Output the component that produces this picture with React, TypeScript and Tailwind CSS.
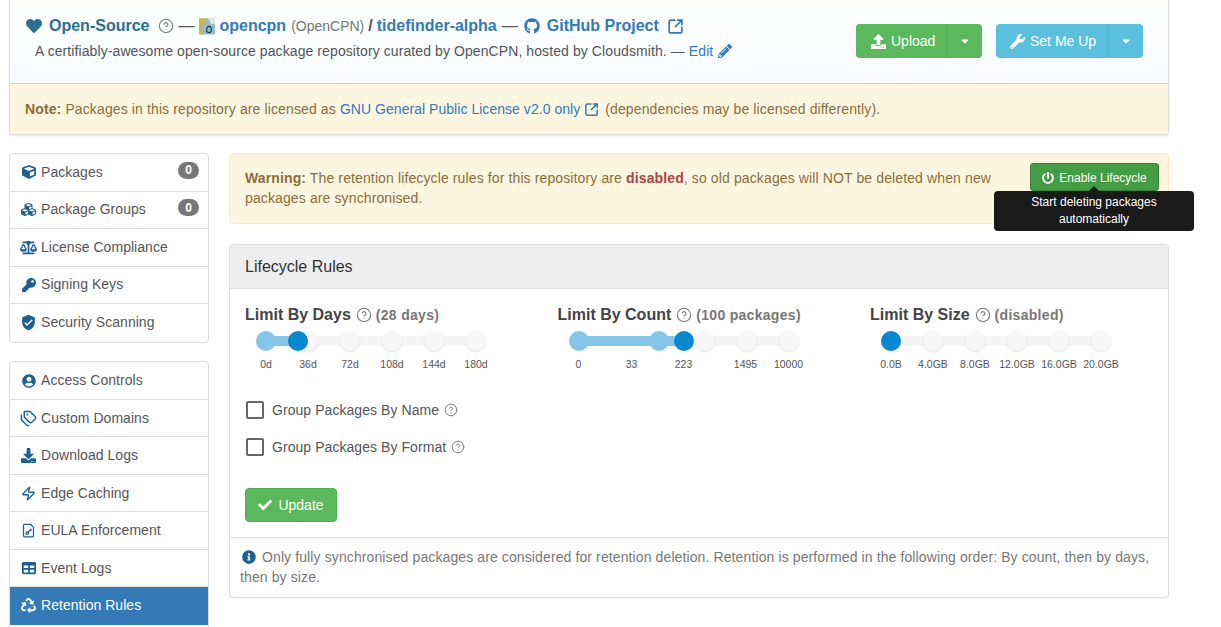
import type { ReactNode } from "react";
import { CircleHelp, SquareArrowOutUpRight, Tags, Zap } from "lucide-react";
import {
  FaBalanceScale,
  FaCaretDown,
  FaCheck,
  FaCube,
  FaCubes,
  FaDownload,
  FaGithub,
  FaHeart,
  FaInfoCircle,
  FaKey,
  FaPencilAlt,
  FaPowerOff,
  FaRecycle,
  FaTable,
  FaUpload,
  FaUserCircle,
  FaWrench,
} from "react-icons/fa";
import { LuFileKey } from "react-icons/lu";
import { MdVerifiedUser } from "react-icons/md";

interface NavItem {
  label: string;
  icon: ReactNode;
  badge?: string;
  active?: boolean;
}

const topNav: NavItem[] = [
  { label: "Packages", icon: <FaCube className="w-[14px] h-[14px]" />, badge: "0" },
  { label: "Package Groups", icon: <FaCubes className="w-[15px] h-[15px]" />, badge: "0" },
  { label: "License Compliance", icon: <FaBalanceScale className="w-[17px] h-[17px]" /> },
  { label: "Signing Keys", icon: <FaKey className="w-[14px] h-[14px]" /> },
  { label: "Security Scanning", icon: <MdVerifiedUser className="w-[17px] h-[17px]" /> },
];

const bottomNav: NavItem[] = [
  { label: "Access Controls", icon: <FaUserCircle className="w-[14px] h-[14px]" /> },
  { label: "Custom Domains", icon: <Tags className="w-[17px] h-[17px]" strokeWidth={2} /> },
  { label: "Download Logs", icon: <FaDownload className="w-[15px] h-[15px]" /> },
  { label: "Edge Caching", icon: <Zap className="w-[15px] h-[15px]" strokeWidth={2.2} /> },
  { label: "EULA Enforcement", icon: <LuFileKey className="w-[15px] h-[15px]" /> },
  { label: "Event Logs", icon: <FaTable className="w-[14px] h-[14px]" /> },
  { label: "Retention Rules", icon: <FaRecycle className="w-[15px] h-[15px]" />, active: true },
];

const SLIDER_TICKS = [0, 42, 84, 126, 168, 210];

interface SliderProps {
  title: string;
  note: string;
  labels: { text: string; x: number }[];
  handles: { x: number; selected?: boolean }[];
}

const sliders: SliderProps[] = [
  {
    title: "Limit By Days",
    note: "(28 days)",
    labels: [
      { text: "0d", x: 0 },
      { text: "36d", x: 42 },
      { text: "72d", x: 84 },
      { text: "108d", x: 126 },
      { text: "144d", x: 168 },
      { text: "180d", x: 210 },
    ],
    handles: [{ x: 0 }, { x: 32, selected: true }],
  },
  {
    title: "Limit By Count",
    note: "(100 packages)",
    labels: [
      { text: "0", x: 0 },
      { text: "33", x: 53 },
      { text: "223", x: 105 },
      { text: "1495", x: 167 },
      { text: "10000", x: 210 },
    ],
    handles: [{ x: 0 }, { x: 80 }, { x: 105, selected: true }],
  },
  {
    title: "Limit By Size",
    note: "(disabled)",
    labels: [
      { text: "0.0B", x: 0 },
      { text: "4.0GB", x: 42 },
      { text: "8.0GB", x: 84 },
      { text: "12.0GB", x: 126 },
      { text: "16.0GB", x: 168 },
      { text: "20.0GB", x: 210 },
    ],
    handles: [{ x: 0, selected: true }],
  },
];

function Help({ className = "w-[16px] h-[16px]" }: { className?: string }) {
  return <CircleHelp className={`inline-block text-[#777] shrink-0 ${className}`} strokeWidth={1.6} />;
}

function NavRow({ item }: { item: NavItem }) {
  return (
    <div
      className={`flex items-center h-[37.5px] pl-[10px] pr-[9px] border-b last:border-b-0 tracking-[0.04px] ${
        item.active ? "bg-[#337ab7] border-[#337ab7] text-white" : "border-[#ddd] text-[#555]"
      }`}
    >
      <span
        className={`w-[17px] mr-[4px] flex justify-center shrink-0 ${
          item.active ? "text-white" : "text-[#1d5f91]"
        }`}
      >
        {item.icon}
      </span>
      <span className="text-[14px] flex-1">{item.label}</span>
      {item.badge && (
        <span className="bg-[#777] text-white text-[12px] font-bold rounded-[10px] w-[21px] h-[17px] flex items-center justify-center -mt-[4px]">
          {item.badge}
        </span>
      )}
    </div>
  );
}

function LimitSlider({ title, note, labels, handles }: SliderProps) {
  const last = handles[handles.length - 1].x;
  return (
    <div className="w-[312.5px] shrink-0">
      <div className="flex items-center h-[22px] tracking-normal">
        <span className="text-[16px] font-bold text-[#444]">{title}</span>
        <Help className="w-[16px] h-[16px] ml-[5px]" />
        <span className="text-[14px] font-bold text-[#777] ml-[4px] tracking-[0.3px]">{note}</span>
      </div>
      <div className="relative ml-[21px] w-[210px] h-[20px] mt-[5px]">
        <div className="absolute left-0 right-0 top-[5px] h-[10px] bg-[#f5f5f5]" />
        {SLIDER_TICKS.filter((x) => x >= last).map((x) => (
          <span
            key={x}
            className="absolute top-0 -ml-[10px] w-[20px] h-[20px] rounded-full bg-[#f7f7f7] shadow-[0_1px_2px_rgba(0,0,0,0.12)]"
            style={{ left: x }}
          />
        ))}
        <div className="absolute left-0 top-[5px] h-[10px] bg-[#85c5e8]" style={{ width: last }} />
        {handles.map((h) => (
          <span
            key={h.x}
            className={`absolute top-0 -ml-[10px] w-[20px] h-[20px] rounded-full ${
              h.selected ? "bg-[#0a88cf]" : "bg-[#85c5e8]"
            }`}
            style={{ left: h.x }}
          />
        ))}
      </div>
      <div className="relative ml-[21px] w-[210px] h-[14px] mt-[6px] tracking-normal">
        {labels.map((l) => (
          <span
            key={l.text}
            className="absolute -translate-x-1/2 text-[10.5px] leading-[14px] text-[#555] whitespace-nowrap"
            style={{ left: l.x }}
          >
            {l.text}
          </span>
        ))}
      </div>
    </div>
  );
}

function Check({ label }: { label: string }) {
  return (
    <div className="flex items-center h-[20px] tracking-[0.06px]">
      <span className="ml-[1px] w-[18px] h-[18px] border-2 border-[#666] rounded-[2px] bg-white shrink-0" />
      <span className="ml-[8px] text-[14px] text-[#555]">{label}</span>
      <Help className="w-[14px] h-[14px] ml-[5px]" />
    </div>
  );
}

export default function App() {
  return (
    <div className="h-[627px] overflow-hidden bg-white pl-[9px] text-[14px] tracking-[0.12px] text-[#555] font-['Liberation_Sans',Arial,sans-serif]">
      <div className="w-[1160px]">
        {/* Repository header */}
        <div className="border-x border-b border-[#ddd] rounded-b-[4px] shadow-[0_1px_2px_rgba(0,0,0,0.1)] h-[135px]">
          <div className="h-[84px] bg-gradient-to-b from-white to-[#f6fbff] border-b border-[#ccc] flex justify-between">
            <div className="pl-[16px] pt-[15px]">
              <div className="flex items-center h-[22px] text-[16px] font-bold whitespace-nowrap tracking-normal">
                <FaHeart className="w-[16px] h-[16px] text-[#2a6f90]" />
                <span className="ml-[7px] text-[#2a6f90]">Open-Source</span>
                <Help className="w-[16px] h-[16px] ml-[9px]" />
                <span className="ml-[4px] font-normal text-[#555]">—</span>
                <svg viewBox="0 0 16 16" className="w-[16px] h-[17px] ml-[5px]">
                  <rect width="16" height="16" fill="#8fbcd0" />
                  <path d="M0 0h9l-2 5-4 2 1 9H0z" fill="#c9b45a" />
                  <path d="M9 0h7v5l-4 1z" fill="#e2e6d8" />
                  <ellipse cx="10" cy="11" rx="2.4" ry="3.2" fill="none" stroke="#243" strokeWidth="1.2" />
                </svg>
                <span className="ml-[4px] text-[#337ab7]">opencpn</span>
                <span className="ml-[5px] text-[14px] font-normal text-[#777]">(OpenCPN)</span>
                <span className="ml-[4px] text-[#555]">/</span>
                <span className="ml-[4px] text-[#337ab7]">tidefinder-alpha</span>
                <span className="ml-[5px] font-normal text-[#555]">—</span>
                <FaGithub className="w-[16px] h-[16px] ml-[6px] text-[#337ab7]" />
                <span className="ml-[7px] text-[#337ab7]">GitHub Project</span>
                <SquareArrowOutUpRight className="w-[17px] h-[17px] ml-[8px] text-[#337ab7]" strokeWidth={2.4} />
              </div>
              <div className="flex items-center mt-[4px] ml-[9px] h-[20px] whitespace-nowrap text-[#555] tracking-[0.09px]">
                <span>
                  A certifiably-awesome open-source package repository curated by OpenCPN, hosted by
                  Cloudsmith. —{" "}
                </span>
                <span className="ml-[4px] text-[#337ab7]">Edit</span>
                <FaPencilAlt className="w-[14px] h-[14px] ml-[5px] text-[#337ab7]" />
              </div>
            </div>
            <div className="flex pt-[24px] pr-[25px] gap-[14px] tracking-normal">
              <div className="flex h-[34px] rounded-[4px] bg-[#5cb85c] text-white">
                <div className="flex items-center pl-[15px] w-[91px] border-r border-[#4cae4c]">
                  <FaUpload className="w-[15px] h-[15px]" />
                  <span className="ml-[5px]">Upload</span>
                </div>
                <div className="flex items-center justify-center w-[35px]">
                  <FaCaretDown className="w-[12px] h-[12px]" />
                </div>
              </div>
              <div className="flex h-[34px] rounded-[4px] bg-[#5bc0de] text-white">
                <div className="flex items-center pl-[14px] w-[112px] border-r border-[#46b8da]">
                  <FaWrench className="w-[15px] h-[15px]" />
                  <span className="ml-[5px]">Set Me Up</span>
                </div>
                <div className="flex items-center justify-center w-[35px]">
                  <FaCaretDown className="w-[12px] h-[12px]" />
                </div>
              </div>
            </div>
          </div>
          <div className="h-[50px] bg-[#fcf6e1] rounded-b-[4px] flex items-center pl-[15px] text-[#8a6d3b] whitespace-nowrap">
            <b>Note:</b>
            <span className="ml-[4px]">Packages in this repository are licensed as</span>
            <span className="ml-[4px] text-[#337ab7] tracking-[0.04px]">GNU General Public License v2.0 only</span>
            <SquareArrowOutUpRight className="w-[15px] h-[15px] ml-[4px] text-[#337ab7]" strokeWidth={2.4} />
            <span className="ml-[6px]">(dependencies may be licensed differently).</span>
          </div>
        </div>

        <div className="flex mt-[18px] gap-[20px]">
          {/* Sidebar */}
          <div className="w-[200px] shrink-0">
            <div className="border border-[#ddd] rounded-[4px] bg-white pt-[0.2px]">
              {topNav.map((item) => (
                <NavRow key={item.label} item={item} />
              ))}
            </div>
            <div className="border border-[#ddd] rounded-[4px] bg-white mt-[18.8px]">
              {bottomNav.map((item) => (
                <NavRow key={item.label} item={item} />
              ))}
              <div className="h-[20px]" />
            </div>
          </div>

          {/* Main column */}
          <div className="w-[940px]">
            <div className="relative h-[71px] bg-[#fcf6e1] border border-[#faebcc] rounded-[4px] flex justify-between pl-[15px] pt-[14px] pr-[9px] text-[#8a6d3b]">
              <p className="w-[765px] leading-[20px]">
                <b>Warning:</b> The retention lifecycle rules for this repository are{" "}
                <b className="text-[#a94442]">disabled</b>, so old packages will NOT be deleted when
                new packages are synchronised.
              </p>
              <div className="-mt-[5px] w-[129px] h-[28px] pt-[1px] bg-[#449d44] border border-[#398439] rounded-[3px] flex items-center justify-center text-[12px] text-white tracking-normal">
                <FaPowerOff className="w-[12px] h-[12px] mr-[5px]" />
                Enable Lifecycle
              </div>
              <div className="absolute top-[37px] left-[764px] w-[200px] h-[40px] bg-[#1a1a1a] rounded-[4px] flex items-center justify-center text-center text-[12px] leading-[17px] text-white px-[20px] tracking-normal">
                <span className="absolute -top-[5px] left-1/2 -ml-[5px] w-0 h-0 border-x-[5px] border-x-transparent border-b-[5px] border-b-[#1a1a1a]" />
                Start deleting packages automatically
              </div>
            </div>

            <div className="mt-[20px] h-[354px] border border-[#ddd] rounded-[4px] shadow-[0_1px_1px_rgba(0,0,0,0.05)] bg-white">
              <div className="h-[44px] bg-[#eee] border-b border-[#ddd] rounded-t-[4px] flex items-center pl-[15px] text-[16px] text-[#333] tracking-normal">
                Lifecycle Rules
              </div>
              <div className="pl-[15px] pt-[15px] h-[249px] border-b border-[#ddd]">
                <div className="flex">
                  {sliders.map((s) => (
                    <LimitSlider key={s.title} {...s} />
                  ))}
                </div>
                <div className="mt-[29px] flex flex-col gap-[17px]">
                  <Check label="Group Packages By Name" />
                  <Check label="Group Packages By Format" />
                </div>
                <div className="mt-[31px] w-[92px] h-[34px] bg-[#5cb85c] border border-[#4cae4c] rounded-[4px] flex items-center justify-center text-white tracking-normal">
                  <FaCheck className="w-[14px] h-[14px] mr-[6px]" />
                  Update
                </div>
              </div>
              <div className="px-[10px] pt-[9px] text-[#777] leading-[20px] tracking-[0.11px]">
                <FaInfoCircle className="inline-block w-[14px] h-[14px] ml-[2px] mr-[6px] text-[#1d5f91] align-[-2px]" />
                Only fully synchronised packages are considered for retention deletion. Retention is
                performed in the following order: By count, then by days, then by size.
              </div>
            </div>
          </div>
        </div>
      </div>
    </div>
  );
}
